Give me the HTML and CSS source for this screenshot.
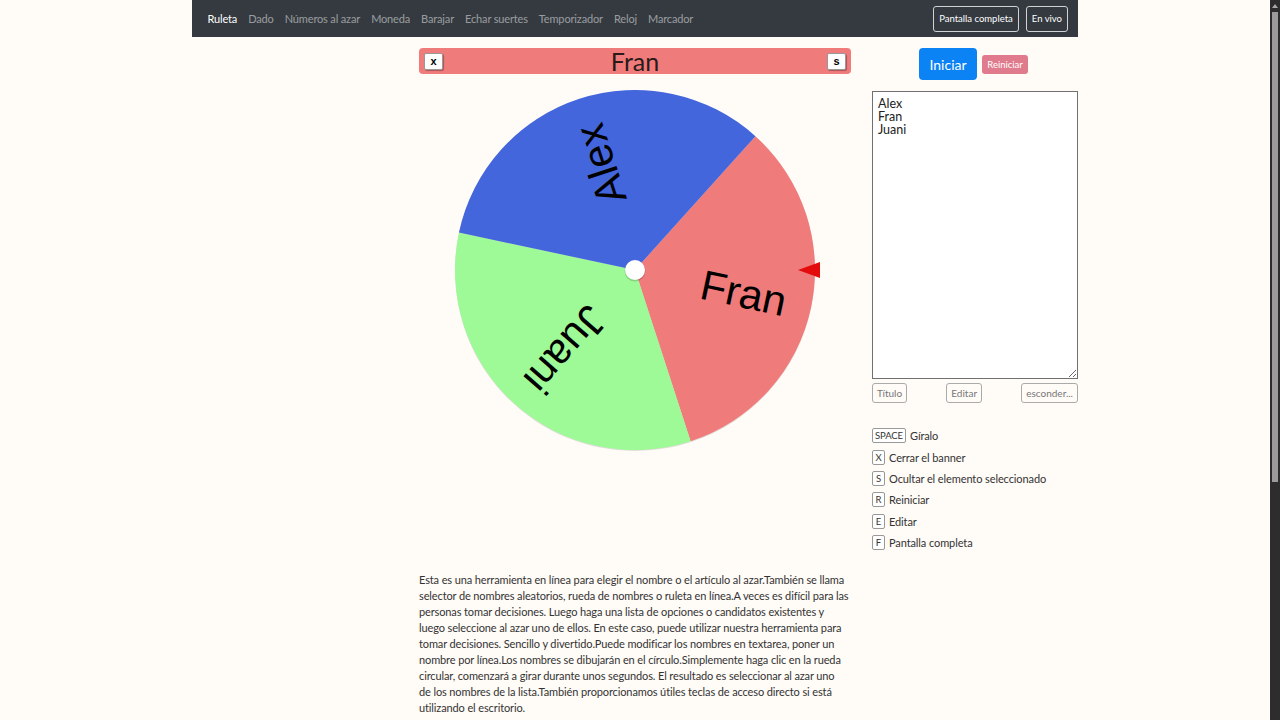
FILE: index.html
```html
<!DOCTYPE html>
<html lang="es">
<head>
  <meta charset="UTF-8">
  <title>Ruleta</title>
  <link rel="stylesheet" href="styles.css">
</head>
<body>
  <div class="container">
    <nav class="navbar">
      <ul class="nav-links">
        <li><a class="active" href="#">Ruleta</a></li>
        <li><a href="#">Dado</a></li>
        <li><a href="#">Números al azar</a></li>
        <li><a href="#">Moneda</a></li>
        <li><a href="#">Barajar</a></li>
        <li><a href="#">Echar suertes</a></li>
        <li><a href="#">Temporizador</a></li>
        <li><a href="#">Reloj</a></li>
        <li><a href="#">Marcador</a></li>
      </ul>
      <div class="nav-actions">
        <button class="btn-outline-light">Pantalla completa</button>
        <button class="btn-outline-light">En vivo</button>
      </div>
    </nav>

    <div class="row">
      <div class="col-wheel">
        <div class="banner">
          <button class="key-btn">x</button>
          <span class="banner-name">Fran</span>
          <button class="key-btn">s</button>
        </div>

        <!-- wheel: 3 slices of 120deg, pointer on the right -->
        <svg class="wheel" width="432" height="364" viewBox="0 0 432 364">
          <circle cx="216" cy="183" r="180" fill="rgba(0,0,0,0.12)"/>
          <path d="M216 182 L336.44 48.23 A180 180 0 0 1 271.62 353.19 Z" fill="#f07b7b"/>
          <path d="M216 182 L271.62 353.19 A180 180 0 0 1 39.93 144.58 Z" fill="#9efa97"/>
          <path d="M216 182 L39.93 144.58 A180 180 0 0 1 336.44 48.23 Z" fill="#4466dc"/>
          <g class="wheel-labels">
            <text transform="translate(216 182) rotate(12)" x="111" y="0">Fran</text>
            <text transform="translate(216 182) rotate(131)" x="106" y="0">Juani</text>
            <text transform="translate(216 182) rotate(252)" x="111" y="0">Alex</text>
          </g>
          <circle cx="216" cy="183" r="10.5" fill="rgba(0,0,0,0.15)"/>
          <circle cx="216" cy="182" r="10" fill="#fff"/>
          <polygon points="379,182 401,174 401,190" fill="#e30b0b"/>
        </svg>

        <p class="about">Esta es una herramienta en línea para elegir el nombre o el artículo al azar.También se llama selector de nombres aleatorios, rueda de nombres o ruleta en línea.A veces es difícil para las personas tomar decisiones. Luego haga una lista de opciones o candidatos existentes y luego seleccione al azar uno de ellos. En este caso, puede utilizar nuestra herramienta para tomar decisiones. Sencillo y divertido.Puede modificar los nombres en textarea, poner un nombre por línea.Los nombres se dibujarán en el círculo.Simplemente haga clic en la rueda circular, comenzará a girar durante unos segundos. El resultado es seleccionar al azar uno de&nbsp;los nombres de la lista.También proporcionamos útiles teclas de acceso directo si está utilizando el escritorio.</p>
      </div>

      <div class="col-side">
        <div class="actions">
          <button class="btn-start">Iniciar</button>
          <button class="btn-reset">Reiniciar</button>
        </div>
        <textarea class="names">Alex
Fran
Juani</textarea>
        <div class="tools">
          <button class="btn-tool">Título</button>
          <button class="btn-tool">Editar</button>
          <button class="btn-tool">esconder...</button>
        </div>
        <ul class="shortcuts">
          <li><kbd>SPACE</kbd> Gíralo</li>
          <li><kbd>X</kbd> Cerrar el banner</li>
          <li><kbd>S</kbd> Ocultar el elemento seleccionado</li>
          <li><kbd>R</kbd> Reiniciar</li>
          <li><kbd>E</kbd> Editar</li>
          <li><kbd>F</kbd> Pantalla completa</li>
        </ul>
      </div>
    </div>
  </div>

  <!-- window scrollbar (dark theme) -->
  <div class="page-scroll"><span class="page-scroll-up"></span><span class="page-scroll-thumb"></span></div>
</body>
</html>
```

FILE: styles.css
```css
html {
  background: #fffbf7;
}

body {
  font-family: Lato, "Open Sans", sans-serif;
  color: #333;
  margin: 0;
  padding-right: 10px;
  min-height: 1073px;
}

.page-scroll {
  position: fixed;
  top: 0;
  right: 0;
  width: 10px;
  height: 100%;
  background: #2d2d2d;
}
.page-scroll-up {
  position: absolute;
  top: 4px;
  left: 2px;
  border-left: 3px solid transparent;
  border-right: 3px solid transparent;
  border-bottom: 4px solid #a8a8a8;
}
.page-scroll-thumb {
  position: absolute;
  top: 12px;
  left: 2px;
  width: 6px;
  height: 470px;
  background: #9b9b9b;
}

.container {
  width: 886px;
  margin: 0 auto;
}

/* top bar */
.navbar {
  display: flex;
  justify-content: space-between;
  align-items: center;
  height: 37px;
  padding: 0 10px;
  background: #343a40;
}
.nav-links { list-style: none; display: flex; margin: 0; padding: 0; }
.nav-links a {
  display: block;
  padding: 0 5.5px;
  font-size: 11px;
  letter-spacing: -0.15px;
  color: rgba(255,255,255,0.5);
  text-decoration: none;
}
.nav-links a.active { color: #fff; }
.nav-actions { display: flex; gap: 7px; }
.btn-outline-light {
  font-family: inherit;
  font-size: 9.5px;
  color: #fff;
  background: transparent;
  border: 1px solid #d0d2d4;
  border-radius: 3px;
  height: 26px;
  padding: 0 5px;
}

.row {
  display: grid;
  grid-template-columns: 432px 206px;
  justify-content: end;
  column-gap: 21px;
  margin-top: 11px;
}

/* winner banner */
.banner {
  display: flex;
  justify-content: space-between;
  align-items: center;
  height: 26px;
  padding: 0 5px;
  background: #f07b7b;
  border-radius: 4px;
}
.banner-name {
  font-size: 25px;
  line-height: 26px;
  color: #2a1a1a;
}
.key-btn {
  width: 19px;
  height: 17px;
  padding: 0;
  font-family: "Liberation Sans", sans-serif;
  font-size: 11px;
  font-weight: bold;
  background: #fff;
  border: 1px solid #999;
  border-radius: 2px;
  box-shadow: 1px 1px 1px rgba(0,0,0,0.3);
}

.wheel { display: block; margin-top: 14px; }
.wheel-labels text {
  font-family: "Liberation Sans", Arial, sans-serif;
  font-size: 42px;
  fill: #000;
  text-anchor: middle;
  dominant-baseline: central;
}

.about {
  margin: 120px 0 0;
  font-size: 11px;
  letter-spacing: -0.12px;
  line-height: 16px;
  color: #333;
}

/* right side */
.actions {
  display: flex;
  justify-content: center;
  align-items: center;
  gap: 5px;
  margin-left: -3px;
}
.btn-start {
  font-family: inherit;
  font-size: 14px;
  color: #fff;
  background: #0c83f4;
  border: 0;
  border-radius: 4px;
  width: 58px;
  height: 32px;
  padding: 0;
}
.btn-reset {
  font-family: inherit;
  font-size: 9.5px;
  color: #fff;
  background: #e07b8d;
  border: 0;
  border-radius: 3px;
  width: 46px;
  height: 19px;
  padding: 0;
}

.names {
  display: block;
  box-sizing: border-box;
  width: 206px;
  height: 288px;
  margin-top: 11px;
  padding: 5px;
  font-family: inherit;
  font-size: 12.5px;
  line-height: 13px;
  color: #222;
  background: #fff;
  border: 1px solid #707070;
  border-radius: 0;
  overflow-y: scroll;
  resize: vertical;
}
.names::-webkit-scrollbar { width: 9px; }
.names::-webkit-scrollbar-track { background: #fff; }
.names::-webkit-scrollbar-thumb { background: #fff; }
.names::-webkit-scrollbar-button:single-button {
  display: block;
  height: 10px;
  background-repeat: no-repeat;
  background-position: center;
  background-size: 6px 4px;
}
.names::-webkit-scrollbar-button:single-button:vertical:decrement {
  background-image: url("data:image/svg+xml,%3Csvg xmlns='http://www.w3.org/2000/svg' viewBox='0 0 6 4'%3E%3Cpath d='M0 4L3 0L6 4Z' fill='gray'/%3E%3C/svg%3E");
}
.names::-webkit-scrollbar-button:single-button:vertical:increment {
  background-image: url("data:image/svg+xml,%3Csvg xmlns='http://www.w3.org/2000/svg' viewBox='0 0 6 4'%3E%3Cpath d='M0 0L3 4L6 0Z' fill='gray'/%3E%3C/svg%3E");
}

.tools {
  display: flex;
  justify-content: space-between;
  margin-top: 4px;
}
.btn-tool {
  font-family: inherit;
  font-size: 10px;
  color: #777;
  background: transparent;
  border: 1px solid #aaa;
  border-radius: 3px;
  height: 20px;
  padding: 0 4px;
}

.shortcuts {
  list-style: none;
  margin: 22px 0 0;
  padding: 0;
  font-size: 11px;
  letter-spacing: -0.1px;
  color: #333;
}
.shortcuts li {
  display: flex;
  align-items: center;
  gap: 4px;
  height: 21.4px;
}
kbd {
  box-sizing: border-box;
  min-width: 13px;
  height: 15px;
  padding: 0 2px;
  font-family: inherit;
  font-size: 9.5px;
  line-height: 13px;
  text-align: center;
  background: #fff;
  border: 1px solid #999;
  border-radius: 2px;
}
```
